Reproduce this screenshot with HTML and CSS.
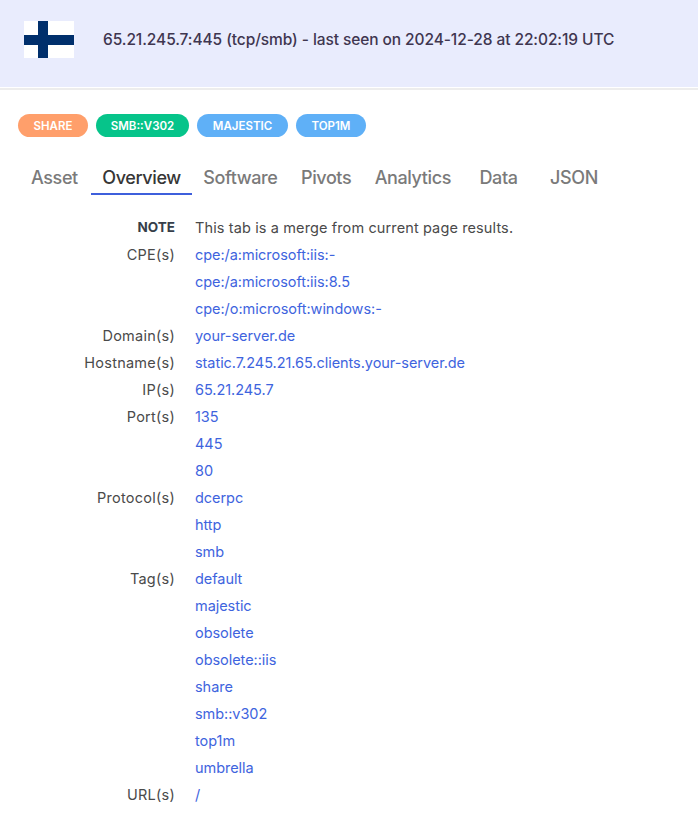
FILE: index.html
```html
<!DOCTYPE html>
<html lang="en">
<head>
<meta charset="utf-8">
<title>65.21.245.7:445</title>
<link rel="stylesheet" href="styles.css">
</head>
<body>
<header class="banner">
  <svg class="flag" viewBox="0 0 50 37" aria-label="Finland flag"><rect width="50" height="37" fill="#fff"/><rect x="14" width="10" height="37" fill="#002f6c"/><rect y="14" width="50" height="10" fill="#002f6c"/></svg>
  <h1 class="title">65.21.245.7:445 (tcp/smb) - last seen on 2024-12-28 at 22:02:19 UTC</h1>
</header>
<div class="rule"></div>
<div class="tags">
  <span class="tag orange">SHARE</span>
  <span class="tag green">SMB::V302</span>
  <span class="tag blue">MAJESTIC</span>
  <span class="tag blue">TOP1M</span>
</div>
<nav class="tabs">
  <a class="tab t-asset">Asset</a>
  <a class="tab active t-overview">Overview</a>
  <a class="tab t-software">Software</a>
  <a class="tab t-pivots">Pivots</a>
  <a class="tab t-analytics">Analytics</a>
  <a class="tab t-data">Data</a>
  <a class="tab t-json">JSON</a>
</nav>
<dl class="facts">
  <dt class="note">NOTE</dt><dd class="plain">This tab is a merge from current page results.</dd>
  <dt>CPE(s)</dt><dd><a>cpe:/a:microsoft:iis:-</a><a>cpe:/a:microsoft:iis:8.5</a><a>cpe:/o:microsoft:windows:-</a></dd>
  <dt>Domain(s)</dt><dd><a>your-server.de</a></dd>
  <dt>Hostname(s)</dt><dd><a>static.7.245.21.65.clients.your-server.de</a></dd>
  <dt>IP(s)</dt><dd><a>65.21.245.7</a></dd>
  <dt>Port(s)</dt><dd><a>135</a><a>445</a><a>80</a></dd>
  <dt>Protocol(s)</dt><dd><a>dcerpc</a><a>http</a><a>smb</a></dd>
  <dt>Tag(s)</dt><dd><a>default</a><a>majestic</a><a>obsolete</a><a>obsolete::iis</a><a>share</a><a>smb::v302</a><a>top1m</a><a>umbrella</a></dd>
  <dt>URL(s)</dt><dd><a>/</a></dd>
</dl>
</body>
</html>
```
FILE: styles.css
```css
* { box-sizing: border-box; }
html, body { margin: 0; padding: 0; background: #fff; }
body { font-family: Inter, "Liberation Sans", sans-serif; color: #4a4a4a; width: 698px; overflow-x: hidden; }
.banner { height: 87px; background: #e9ecfd; display: flex; align-items: flex-start; padding: 21px 24px 0; gap: 29px; }
.flag { width: 50px; height: 37px; flex: none; }
.title { margin: 0; font-size: 15.5px; font-weight: 500; color: #3f3650; letter-spacing: -0.085px; line-height: 37px; white-space: nowrap; }
.rule { height: 2px; margin-top: 1px; background: #ededed; }
.tags { display: flex; gap: 8px; padding: 24px 18px 0; }
.tag { height: 23px; border-radius: 12px; color: #fff; font-size: 11.5px; font-weight: 600; line-height: 24px; display: flex; justify-content: center; }
.orange { background: #ff9f6b; width: 70px; }
.green { background: #06c48a; width: 93px; }
.blue { background: #5fb0f7; width: 91px; }
.blue:last-child { width: 70px; }
.tabs { display: flex; padding: 23px 0 0 20px; }
.tab { height: 35px; font-size: 18px; font-weight: 500; line-height: 35px; letter-spacing: -0.4px; color: #7a7a7a; padding: 0 11px; border-bottom: 2px solid transparent; white-space: nowrap; }
.tab.active { color: #363636; border-bottom-color: #3e5fdc; }
.t-overview { margin-left: 2.5px; }
.t-software { margin-left: 0.5px; }
.t-pivots, .t-analytics { margin-left: 1.5px; }
.t-data { margin-left: 6.5px; }
.t-json { margin-left: 10.5px; }
.facts { display: grid; grid-template-columns: 175px 1fr; column-gap: 20px; margin: 19px 0 0; font-size: 14.5px; letter-spacing: 0.12px; line-height: 27px; }
dt { text-align: right; color: #4a4a4a; letter-spacing: 0.25px; }
dt.note { font-size: 13.5px; letter-spacing: 0; font-weight: 700; color: #363e4a; }
dd { margin: 0; display: flex; flex-direction: column; }
dd.plain { color: #4a4a4a; }
dd a { color: #3e64de; letter-spacing: -0.05px; }
```
